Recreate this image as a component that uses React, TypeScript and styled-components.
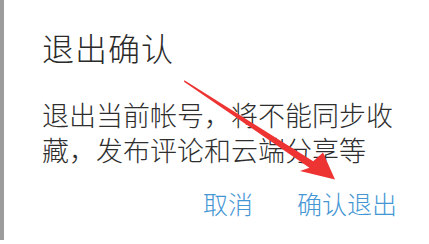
import React from 'react';
import styled, { createGlobalStyle } from 'styled-components';

const GlobalStyle = createGlobalStyle`
  html, body {
    margin: 0;
    padding: 0;
    background: #fff;
  }
  body {
    font-family: "Noto Sans CJK SC", "Noto Sans", sans-serif;
  }
`;

const Screen = styled.div`
  position: relative;
  width: 429px;
  height: 244px;
  overflow: hidden;
  background: #fff;
`;

const Frame = styled.div`
  display: flex;
  height: 240px;
`;

const Backdrop = styled.div`
  width: 4px;
  background: #9c9c9c;
`;

const Dialog = styled.div`
  flex: 1;
  display: flex;
  flex-direction: column;
  padding: 28px 0 0 38px;
  background: #fff;
`;

const Title = styled.h2`
  margin: 0;
  font-size: 32px;
  line-height: 38px;
  font-weight: 300;
  letter-spacing: 1px;
  color: #2a2a2a;
`;

const Message = styled.p`
  margin: 31px 0 0;
  width: 360px;
  font-size: 27px;
  line-height: 35px;
  font-weight: 300;
  color: #2e2e2e;
`;

const Actions = styled.div`
  display: flex;
  justify-content: flex-end;
  gap: 44px;
  margin-top: 21px;
  padding-right: 32px;
`;

const ActionButton = styled.button`
  border: 0;
  padding: 0;
  background: none;
  font-family: inherit;
  font-size: 25px;
  line-height: 30px;
  font-weight: 300;
  color: #4596d4;
  cursor: pointer;
`;

const Arrow = styled.svg`
  position: absolute;
  left: 0;
  top: 0;
  pointer-events: none;
`;

export default function App() {
  return (
    <Screen>
      <GlobalStyle />
      <Frame>
        <Backdrop />
        <Dialog>
          <Title>退出确认</Title>
          <Message>退出当前帐号，将不能同步收藏，发布评论和云端分享等</Message>
          <Actions>
            <ActionButton>取消</ActionButton>
            <ActionButton>确认退出</ActionButton>
          </Actions>
        </Dialog>
      </Frame>
      <Arrow width="429" height="244" viewBox="0 0 429 244">
        <polygon
          points="184.4,80.2 184,81.8 309.4,167.8 300,171 335,179.5 323,152.5 313.2,161.2"
          fill="#ee3333"
        />
      </Arrow>
    </Screen>
  );
}
